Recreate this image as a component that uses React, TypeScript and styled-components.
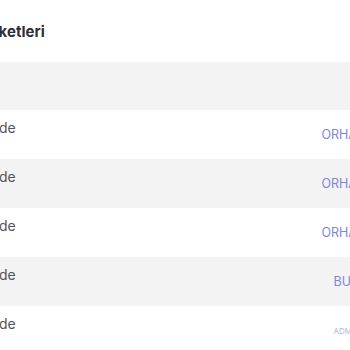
import styled, { createGlobalStyle } from 'styled-components';

const GlobalStyle = createGlobalStyle`
  html, body {
    margin: 0;
    padding: 0;
    background: #ffffff;
    font-family: Inter, "Noto Sans", sans-serif;
  }
  body {
    overflow: hidden;
  }
`;

const Viewport = styled.div`
  width: 350px;
  height: 350px;
  overflow: hidden;
`;

const Panel = styled.section`
  width: 499px;
  margin-left: -60px;
`;

const Title = styled.h2`
  margin: 0;
  height: 62px;
  padding-left: 24px;
  display: flex;
  align-items: center;
  font-size: 15px;
  font-weight: 700;
  color: #2f3033;
  white-space: nowrap;
`;

const Table = styled.div`
  display: flex;
  flex-direction: column;
`;

const Row = styled.div<{ $striped?: boolean; $head?: boolean }>`
  display: grid;
  grid-template-columns: 200px 1fr 140px;
  height: ${(p) => (p.$head ? '48px' : '49px')};
  background: ${(p) => (p.$striped ? '#f3f3f3' : '#ffffff')};
`;

const StatusCell = styled.div`
  padding: 10px 0 0 2px;
  font-size: 14px;
  line-height: 16px;
  color: #535457;
  white-space: nowrap;
`;

const Spacer = styled.div``;

const UserCell = styled.div<{ $muted?: boolean }>`
  display: flex;
  align-items: center;
  justify-content: center;
  white-space: nowrap;
  font-size: ${(p) => (p.$muted ? '8px' : '12.5px')};
  color: ${(p) => (p.$muted ? '#b4b7df' : '#7f84dc')};
`;

const rows = [
  { user: 'ORHAN YILMAZ' },
  { user: 'ORHAN YILMAZ' },
  { user: 'ORHAN YILMAZ' },
  { user: 'BURAK ŞEN' },
  { user: 'ADMİN KULLANICI', muted: true },
];

export default function App() {
  return (
    <Viewport>
      <GlobalStyle />
      <Panel>
        <Title>Hareketleri</Title>
        <Table>
          <Row $striped $head>
            <Spacer />
            <Spacer />
            <Spacer />
          </Row>
          {rows.map((r, i) => (
            <Row key={i} $striped={i % 2 === 1}>
              <StatusCell>Beklemede</StatusCell>
              <Spacer />
              <UserCell $muted={r.muted}>{r.user}</UserCell>
            </Row>
          ))}
        </Table>
      </Panel>
    </Viewport>
  );
}
